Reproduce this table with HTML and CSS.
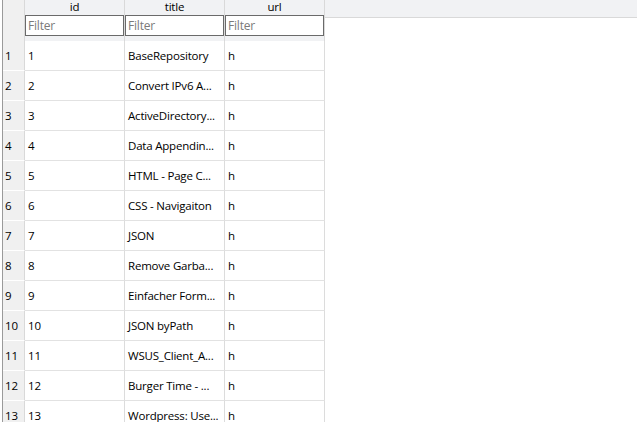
FILE: index.html
```html
<!DOCTYPE html>
<html>
<head>
<meta charset="utf-8">
<link rel="stylesheet" href="styles.css">
</head>
<body>
<div class="grid">
  <div class="head">
    <div class="hrow labels">
      <div class="c num"></div>
      <div class="c col">id</div>
      <div class="c col">title</div>
      <div class="c col">url</div>
      <div class="rest"></div>
    </div>
    <div class="hrow filters">
      <div class="c num"></div>
      <div class="c col"><div class="filter">Filter</div></div>
      <div class="c col"><div class="filter">Filter</div></div>
      <div class="c col"><div class="filter">Filter</div></div>
    </div>
  </div>
  <div class="body">
    <div class="row"><div class="c num">1</div><div class="c col">1</div><div class="c col">BaseRepository</div><div class="c col">h</div></div>
    <div class="row"><div class="c num">2</div><div class="c col">2</div><div class="c col">Convert IPv6 A...</div><div class="c col">h</div></div>
    <div class="row"><div class="c num">3</div><div class="c col">3</div><div class="c col">ActiveDirectory...</div><div class="c col">h</div></div>
    <div class="row"><div class="c num">4</div><div class="c col">4</div><div class="c col">Data Appendin...</div><div class="c col">h</div></div>
    <div class="row"><div class="c num">5</div><div class="c col">5</div><div class="c col">HTML - Page C...</div><div class="c col">h</div></div>
    <div class="row"><div class="c num">6</div><div class="c col">6</div><div class="c col">CSS - Navigaiton</div><div class="c col">h</div></div>
    <div class="row"><div class="c num">7</div><div class="c col">7</div><div class="c col">JSON</div><div class="c col">h</div></div>
    <div class="row"><div class="c num">8</div><div class="c col">8</div><div class="c col">Remove Garba...</div><div class="c col">h</div></div>
    <div class="row"><div class="c num">9</div><div class="c col">9</div><div class="c col">Einfacher Form...</div><div class="c col">h</div></div>
    <div class="row"><div class="c num">10</div><div class="c col">10</div><div class="c col">JSON byPath</div><div class="c col">h</div></div>
    <div class="row"><div class="c num">11</div><div class="c col">11</div><div class="c col">WSUS_Client_A...</div><div class="c col">h</div></div>
    <div class="row"><div class="c num">12</div><div class="c col">12</div><div class="c col">Burger Time - ...</div><div class="c col">h</div></div>
    <div class="row"><div class="c num">13</div><div class="c col">13</div><div class="c col">Wordpress: Use...</div><div class="c col">h</div></div>
  </div>
</div>
</body>
</html>
```

FILE: styles.css
```css
html, body {
  margin: 0;
  padding: 0;
  background: #ffffff;
}
body {
  width: 637px;
  height: 422px;
  overflow: hidden;
  font-family: "Open Sans", "Noto Sans", sans-serif;
  font-size: 11.5px;
  letter-spacing: -0.2px;
  color: #000;
}
.grid {
  margin-left: 2px;
  border-left: 1px solid #9a9a9a;
  height: 422px;
}
.hrow {
  display: flex;
}
.labels {
  height: 15px;
  line-height: 13px;
  background: #f1f2f4;
}
.labels .col {
  text-align: center;
  border-right: 1px solid #d9d9d9;
}
.labels .rest {
  flex: 1;
  height: 18px;
  box-sizing: border-box;
  border-bottom: 1px solid #d9d9d9;
  background: #f1f2f4;
}
.filters {
  height: 26px;
  background: #f1f2f4;
  width: 322px;
}
.filters .col {
  border-right: 1px solid #d9d9d9;
}
.c {
  box-sizing: border-box;
  flex: none;
}
.num {
  width: 22px;
  border-right: 1px solid #d9d9d9;
  background: #f0f0f0;
  padding-left: 2px;
}
.col {
  width: 100px;
}
.filter {
  box-sizing: border-box;
  width: 99px;
  height: 21px;
  border: 1px solid #6a6a6a;
  background: #fff;
  color: #7a7a7a;
  font-size: 12px;
  line-height: 19px;
  padding-left: 2px;
}
.row {
  display: flex;
  height: 30px;
  line-height: 29px;
}
.row .col {
  border-right: 1px solid #dcdcdc;
  border-bottom: 1px solid #e2e2e2;
  padding-left: 3px;
  white-space: nowrap;
  overflow: hidden;
}
.row .num {
  border-bottom: 1px solid #ffffff;
}
```
